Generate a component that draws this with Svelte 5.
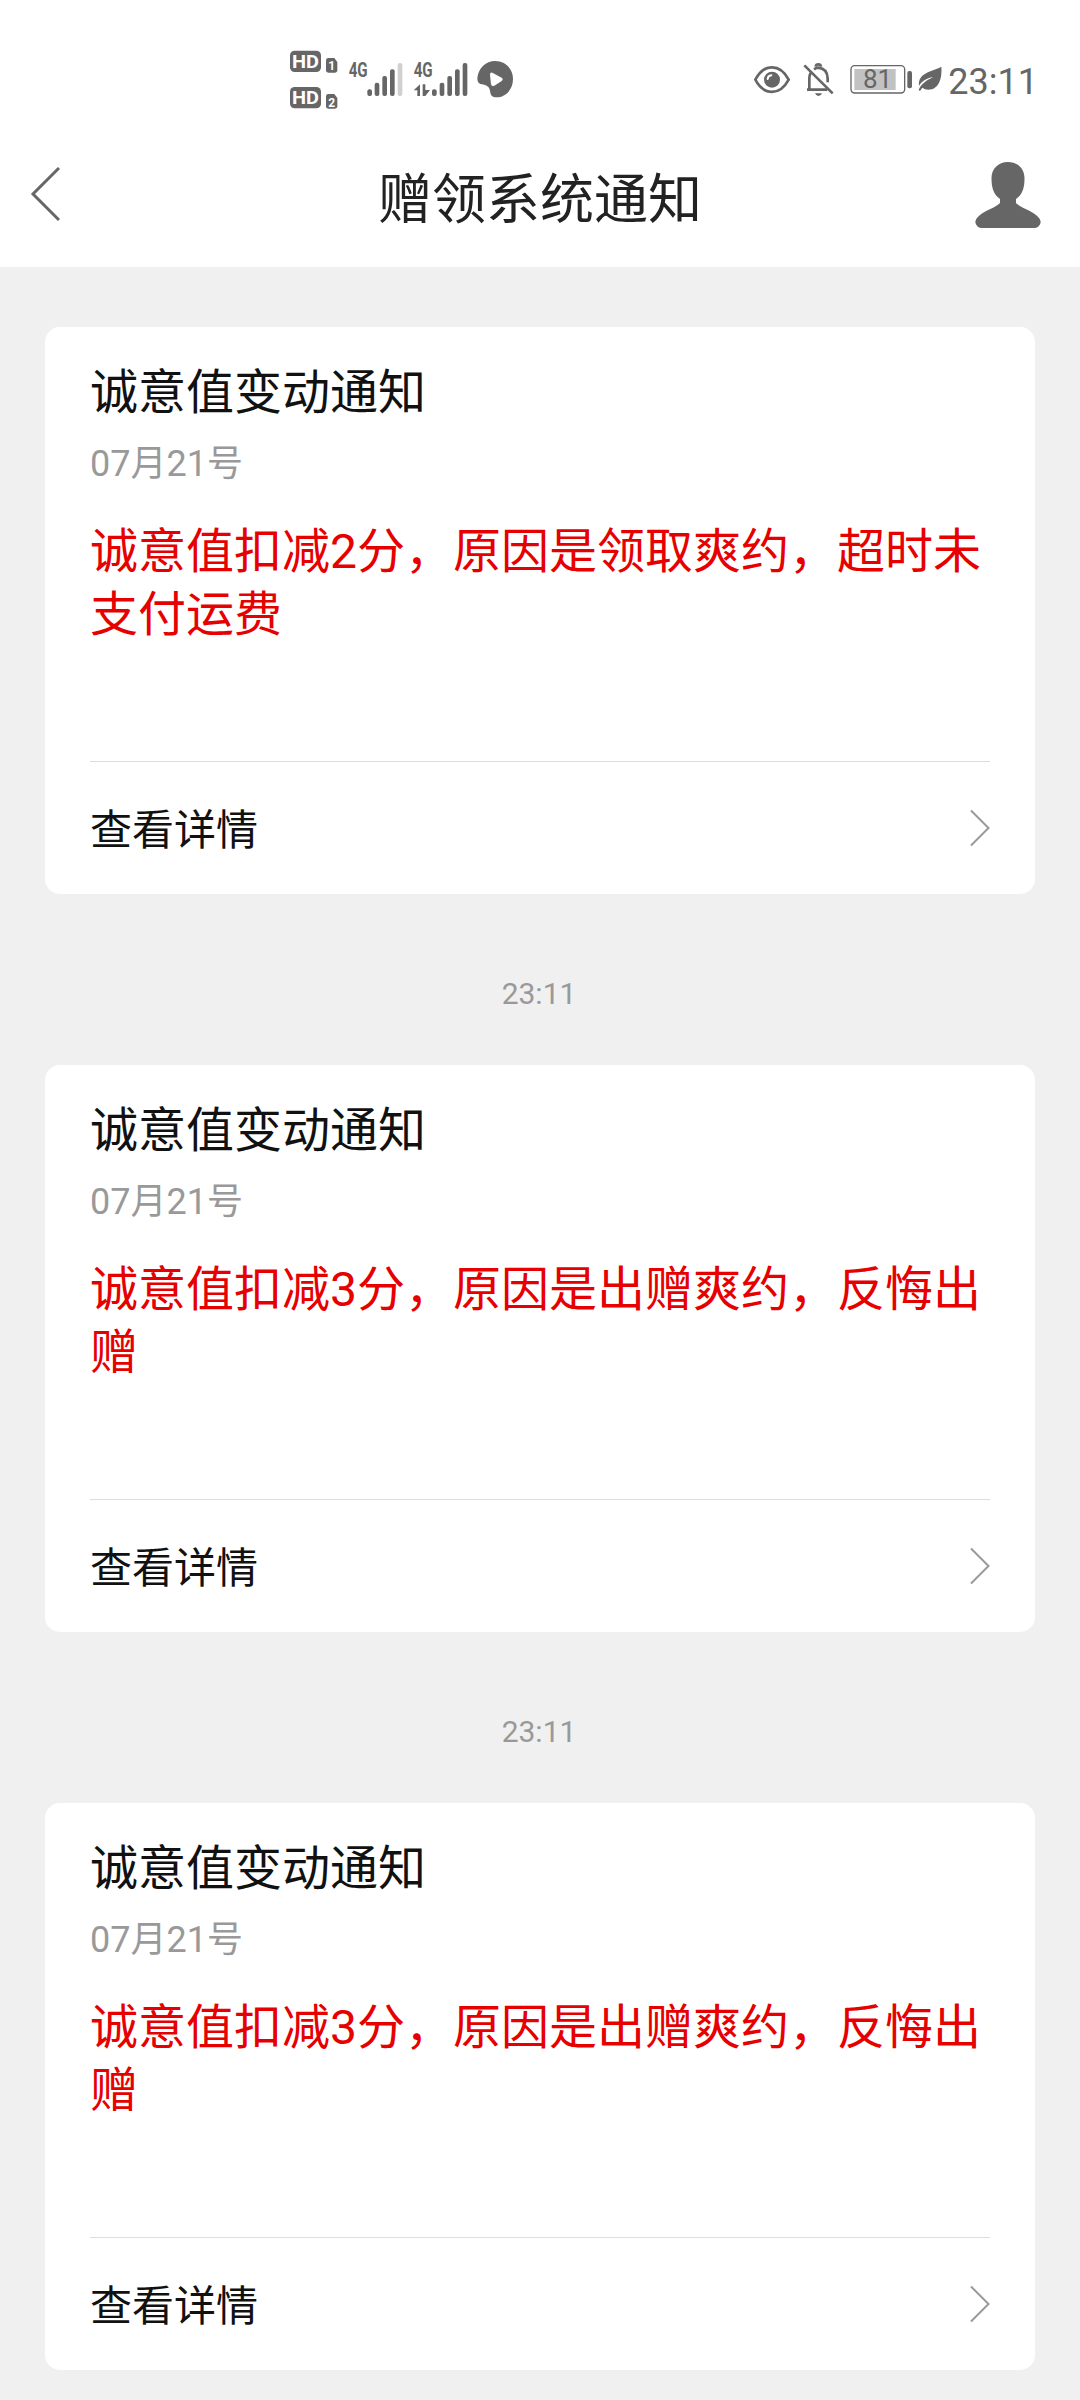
<script lang="ts">
  type Notice = {
    id: number;
    title: string;
    date: string;
    message: string;
    time?: string;
  };

  const notices: Notice[] = [
    {
      id: 1,
      title: '诚意值变动通知',
      date: '07月21号',
      message: '诚意值扣减2分，原因是领取爽约，超时未支付运费',
    },
    {
      id: 2,
      title: '诚意值变动通知',
      date: '07月21号',
      message: '诚意值扣减3分，原因是出赠爽约，反悔出赠',
      time: '23:11',
    },
    {
      id: 3,
      title: '诚意值变动通知',
      date: '07月21号',
      message: '诚意值扣减3分，原因是出赠爽约，反悔出赠',
      time: '23:11',
    },
  ];

  const firstSim = [
    { x: 262, y: 148 },
    { x: 284, y: 128 },
    { x: 307, y: 108 },
    { x: 330, y: 88 },
  ];
  const secondSim = [
    { x: 456, y: 148 },
    { x: 479, y: 128 },
    { x: 502, y: 108 },
    { x: 525, y: 88 },
    { x: 548, y: 69 },
  ];
</script>

<div class="screen">
  <div class="status_bar">
    <svg class="signals" viewBox="0 0 720 240">
      <rect x="30" y="32" width="93" height="64" rx="14" />
      <text class="hd" x="36" y="84" textLength="81" lengthAdjust="spacingAndGlyphs">HD</text>
      <path d="M145 54h18l9 12v25q0 7-7 7h-20q-7 0-7-7v-30q0-7 7-7z" />
      <text class="slot" x="145" y="91">1</text>
      <rect x="30" y="141" width="93" height="64" rx="14" />
      <text class="hd" x="36" y="193" textLength="81" lengthAdjust="spacingAndGlyphs">HD</text>
      <path d="M145 162h18l9 12v25q0 7-7 7h-20q-7 0-7-7v-30q0-7 7-7z" />
      <text class="slot" x="145" y="200">2</text>

      <text class="net" x="206" y="112" textLength="57" lengthAdjust="spacingAndGlyphs">4G</text>
      {#each firstSim as bar}
        <rect x={bar.x} y={bar.y} width="14" height={168 - bar.y} rx="6" />
      {/each}
      <rect class="faint" x="353" y="69" width="14" height="99" rx="6" />

      <text class="net" x="401" y="112" textLength="57" lengthAdjust="spacingAndGlyphs">4G</text>
      <path d="M420 133v35h-8v-17h-11zM428 133h8v17h14l-14 18h-8z" />
      {#each secondSim as bar}
        <rect x={bar.x} y={bar.y} width="14" height={168 - bar.y} rx="6" />
      {/each}

      <path
        fill-rule="evenodd"
        d="M645 63C677 63 699 87 699 117C699 149 676 172 650 172C622 172 638 146 620 137C607 131 592 137 592 115C595 84 618 63 645 63zM637 98Q630 96 630 104L633 133Q635 141 643 137L665 123Q671 118 665 113z"
      />
    </svg>

    <div class="status_right">
      <svg class="indicators" viewBox="36 30 576 120">
        <path
          class="line"
          d="M46 89C72 40 120 40 146 89C120 138 72 138 46 89z"
        />
        <circle cx="96" cy="89" r="24" />
        <path class="shine" d="M83 87Q84 77 94 76" />

        <path class="line" d="M201 119H262M208 119V85Q208 76 212 69M222 58Q229 53 235 53Q262 56 263 85V97" />
        <path class="line" d="M227 50Q228 43 235 43Q242 43 243 50" />
        <path d="M225 130h21q-3 8-10.500 8t-10.500-8z" />
        <path class="line" d="M193 46L278 130" />

        <rect class="shell" x="333" y="47" width="161" height="82" rx="11" />
        <rect class="charge" x="343" y="57" width="124" height="63" />
        <text class="level" x="369" y="115">81</text>
        <rect x="502" y="63" width="14" height="52" rx="6" />

        <path
          d="M604 50C607 86 596 119 565 119Q554 119 547 113L540 123L536 120C543 102 560 90 580 81C558 85 545 94 537 108C533 66 576 66 604 50z"
        />
      </svg>
      <span class="clock">23:11</span>
    </div>
  </div>

  <header>
    <svg class="back" viewBox="0 0 30 56"><path d="M29 2L3 28L29 54" /></svg>
    <h1>赠领系统通知</h1>
    <svg class="user" viewBox="0 0 66 66">
      <path
        d="M33 0C43 0 49.500 7 49.500 16C49.500 25 48 32 41 37V41C46 46 55 48 61 53C65 56 66 59 65.500 61Q64 66 59 66H7Q2 66 .5 61C0 59 1 56 5 53C11 48 20 46 25 41V37C18 32 16.500 25 16.500 16C16.500 7 23 0 33 0z"
      />
    </svg>
  </header>

  <main>
    {#each notices as notice (notice.id)}
      {#if notice.time}
        <div class="time">{notice.time}</div>
      {/if}
      <article class="card">
        <h2>{notice.title}</h2>
        <div class="date">{notice.date}</div>
        <p>{notice.message}</p>
        <div class="detail">
          <span>查看详情</span>
          <svg class="arrow" viewBox="0 0 20 38"><path d="M1 1.500L18.500 19L1 36.500" /></svg>
        </div>
      </article>
    {/each}
  </main>
</div>

<style>
  :global(body) {
    margin: 0;
    background-color: #f0f0f0;
  }

  .screen {
    width: 1080px;
    height: 2400px;
    overflow: hidden;

    background-color: #f0f0f0;
    color: #111;
    font-family: Roboto, 'Noto Sans CJK SC', sans-serif;
  }

  .status_bar {
    display: flex;
    justify-content: space-between;
    box-sizing: border-box;

    height: 140px;
    padding: 40px 42px 0 280px;

    background-color: white;
    color: #666;
  }

  .status_bar svg {
    fill: #666;
  }

  .signals {
    width: 240px;
    height: 80px;
  }

  .signals .hd {
    fill: white;
    font-size: 56px;
    font-weight: 700;
  }

  .signals .slot {
    fill: white;
    font-size: 36px;
    font-weight: 700;
  }

  .signals .net {
    font-size: 59px;
    font-weight: 700;
  }

  .signals .faint {
    fill: #d0d0d0;
  }

  .status_right {
    display: flex;
    align-items: flex-start;
    gap: 4px;
  }

  .indicators {
    width: 192px;
    height: 40px;
    margin-top: 20px;
  }

  .indicators .line {
    fill: none;
    stroke: #666;
    stroke-width: 8;
  }

  .indicators .shine {
    fill: none;
    stroke: white;
    stroke-width: 6;
    stroke-linecap: round;
  }

  .indicators .shell {
    fill: none;
    stroke: #666;
    stroke-width: 4;
  }

  .indicators .charge {
    fill: #c2c2c2;
  }

  .indicators .level {
    font-size: 78px;
  }

  .clock {
    margin-top: 21px;

    font-size: 36px;
    line-height: 42px;
  }

  header {
    display: flex;
    justify-content: space-between;
    align-items: flex-start;
    box-sizing: border-box;

    height: 127px;
    padding: 22px 39px 0 30px;

    background-color: white;
  }

  .back {
    width: 30px;
    height: 56px;
    margin: 4px 45px 0 0;

    fill: none;
    stroke: #666;
    stroke-width: 3;
  }

  h1 {
    margin: 0;

    color: #222;
    font-size: 54px;
    font-weight: 400;
    line-height: 78px;
  }

  .user {
    width: 66px;
    height: 66px;

    fill: #666;
  }

  main {
    padding: 60px 45px 0;
  }

  .card {
    display: flex;
    flex-direction: column;
    box-sizing: border-box;

    height: 567px;
    padding: 31px 45px 0;

    background-color: white;
    border-radius: 15px;
  }

  h2 {
    margin: 0;

    font-size: 48px;
    font-weight: 400;
    line-height: 70px;
  }

  .date {
    margin-top: 9px;

    color: #999;
    font-size: 36px;
    line-height: 54px;
  }

  p {
    margin: 29px 0 0;

    color: #e60000;
    font-size: 48px;
    line-height: 63px;
  }

  .detail {
    display: flex;
    justify-content: space-between;
    align-items: center;

    height: 132px;
    margin-top: auto;

    border-top: 1px solid #ddd;

    font-size: 42px;
  }

  .detail span {
    padding-bottom: 4px;
  }

  .arrow {
    width: 20px;
    height: 38px;

    fill: none;
    stroke: #999;
    stroke-width: 2;
  }

  .time {
    height: 171px;
    padding-right: 2px;

    color: #999;
    font-size: 30px;
    line-height: 200px;
    text-align: center;
  }
</style>
